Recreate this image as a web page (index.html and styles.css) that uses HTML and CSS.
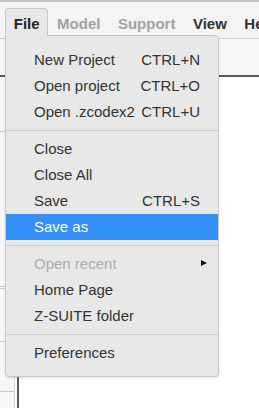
FILE: index.html
```html
<!DOCTYPE html>
<html lang="en">
<head>
    <meta charset="UTF-8">
    <meta name="viewport" content="width=device-width, initial-scale=1.0">
    <title>File menu</title>
    <link rel="stylesheet" href="styles.css">
</head>
<body>
    <div class="menubar">
        <span class="menubar-item is-open">File</span>
        <span class="menubar-item is-disabled">Model</span>
        <span class="menubar-item is-disabled">Support</span>
        <span class="menubar-item">View</span>
        <span class="menubar-item">Help</span>

        <div class="dropdown">
            <div class="item"><span>New Project</span><span class="key">CTRL+N</span></div>
            <div class="item"><span>Open project</span><span class="key">CTRL+O</span></div>
            <div class="item"><span>Open .zcodex2</span><span class="key">CTRL+U</span></div>
            <div class="sep"></div>
            <div class="item"><span>Close</span></div>
            <div class="item"><span>Close All</span></div>
            <div class="item"><span>Save</span><span class="key">CTRL+S</span></div>
            <div class="item is-active"><span>Save as</span></div>
            <div class="sep"></div>
            <div class="item is-disabled"><span>Open recent</span><span class="arrow"></span></div>
            <div class="item"><span>Home Page</span></div>
            <div class="item"><span>Z-SUITE folder</span></div>
            <div class="sep"></div>
            <div class="item"><span>Preferences</span></div>
        </div>
    </div>

    <div class="toolbar"></div>

    <div class="main">
        <div class="side">
            <div class="side-row row-1"></div>
            <div class="side-row row-2"></div>
            <div class="side-row row-3"></div>
            <div class="side-row row-4"></div>
        </div>
        <div class="content"></div>
    </div>
</body>
</html>
```

FILE: styles.css
```css
html, body {
    height: 100%;
}

body {
    margin: 0;
    font-family: 'Liberation Sans', Arial, sans-serif;
    background-color: #fff;
    color: #333;
    overflow: hidden;
    display: flex;
    flex-direction: column;
}

/* top menu bar */
.menubar {
    position: relative;
    display: flex;
    height: 36px;
    padding-left: 5px;
    background-color: #f4f4f4;
    border-top: 2px solid #c4c4c4;
    border-bottom: 1px solid #d0d0d0;
    white-space: nowrap;
    flex-shrink: 0;
}

.menubar-item {
    box-sizing: border-box;
    height: 28px;
    margin-top: 6px;
    padding: 5px 7.75px 0;
    border: 1px solid transparent;
    border-bottom: none;
    font-size: 15px;
    font-weight: bold;
    line-height: 20px;
    color: #333;
}

.menubar-item.is-disabled {
    color: #a2a2a2;
}

.menubar-item.is-open {
    position: relative;
    z-index: 2;
    color: #222;
    background-color: #e8e8e8;
    border-color: #c8c8c8;
    border-radius: 4px 4px 0 0;
}

/* dropdown */
.dropdown {
    position: absolute;
    z-index: 1;
    top: 33px;
    left: 5px;
    width: 212px;
    padding: 11px 0 10px;
    background-color: #e8e8e8;
    border: 1px solid #c8c8c8;
    border-radius: 0 4px 4px 4px;
    box-shadow: 0 1px 2px rgba(0,0,0,0.12);
}

.item {
    display: flex;
    justify-content: space-between;
    align-items: center;
    height: 26px;
    padding: 0 18px 0 28px;
    font-size: 15px;
    line-height: 26px;
    color: #333;
}

.item.is-active {
    background-color: #348ff7;
    color: #fff;
}

.item.is-disabled {
    color: #ababab;
}

.arrow {
    width: 0;
    height: 0;
    margin: -3px -7px 0 0;
    border-left: 6px solid #111;
    border-top: 3px solid transparent;
    border-bottom: 3px solid transparent;
}

.sep {
    height: 1px;
    margin: 5px 0;
    background-color: #cdcdcd;
}

/* page behind the menu */
.toolbar {
    height: 36px;
    background-color: #f6f6f6;
    border-bottom: 2px solid #5c5c5c;
    flex-shrink: 0;
}

.main {
    flex: 1;
    display: flex;
}

.side {
    width: 14px;
    background-color: #f7f7f7;
    border-right: 1px solid #d2d2d2;
}

.side-row {
    border-bottom: 1px solid #c8c8c8;
}

.row-1 { height: 54px; }
.row-2 { height: 154px; border-bottom: 3px double #c8c8c8; }
.row-3 { height: 52px; }
.row-4 { height: 49px; }

.content {
    flex: 1;
    margin-left: 2px;
    border-left: 2px solid #5c5c5c;
    background-color: #fff;
}
```
